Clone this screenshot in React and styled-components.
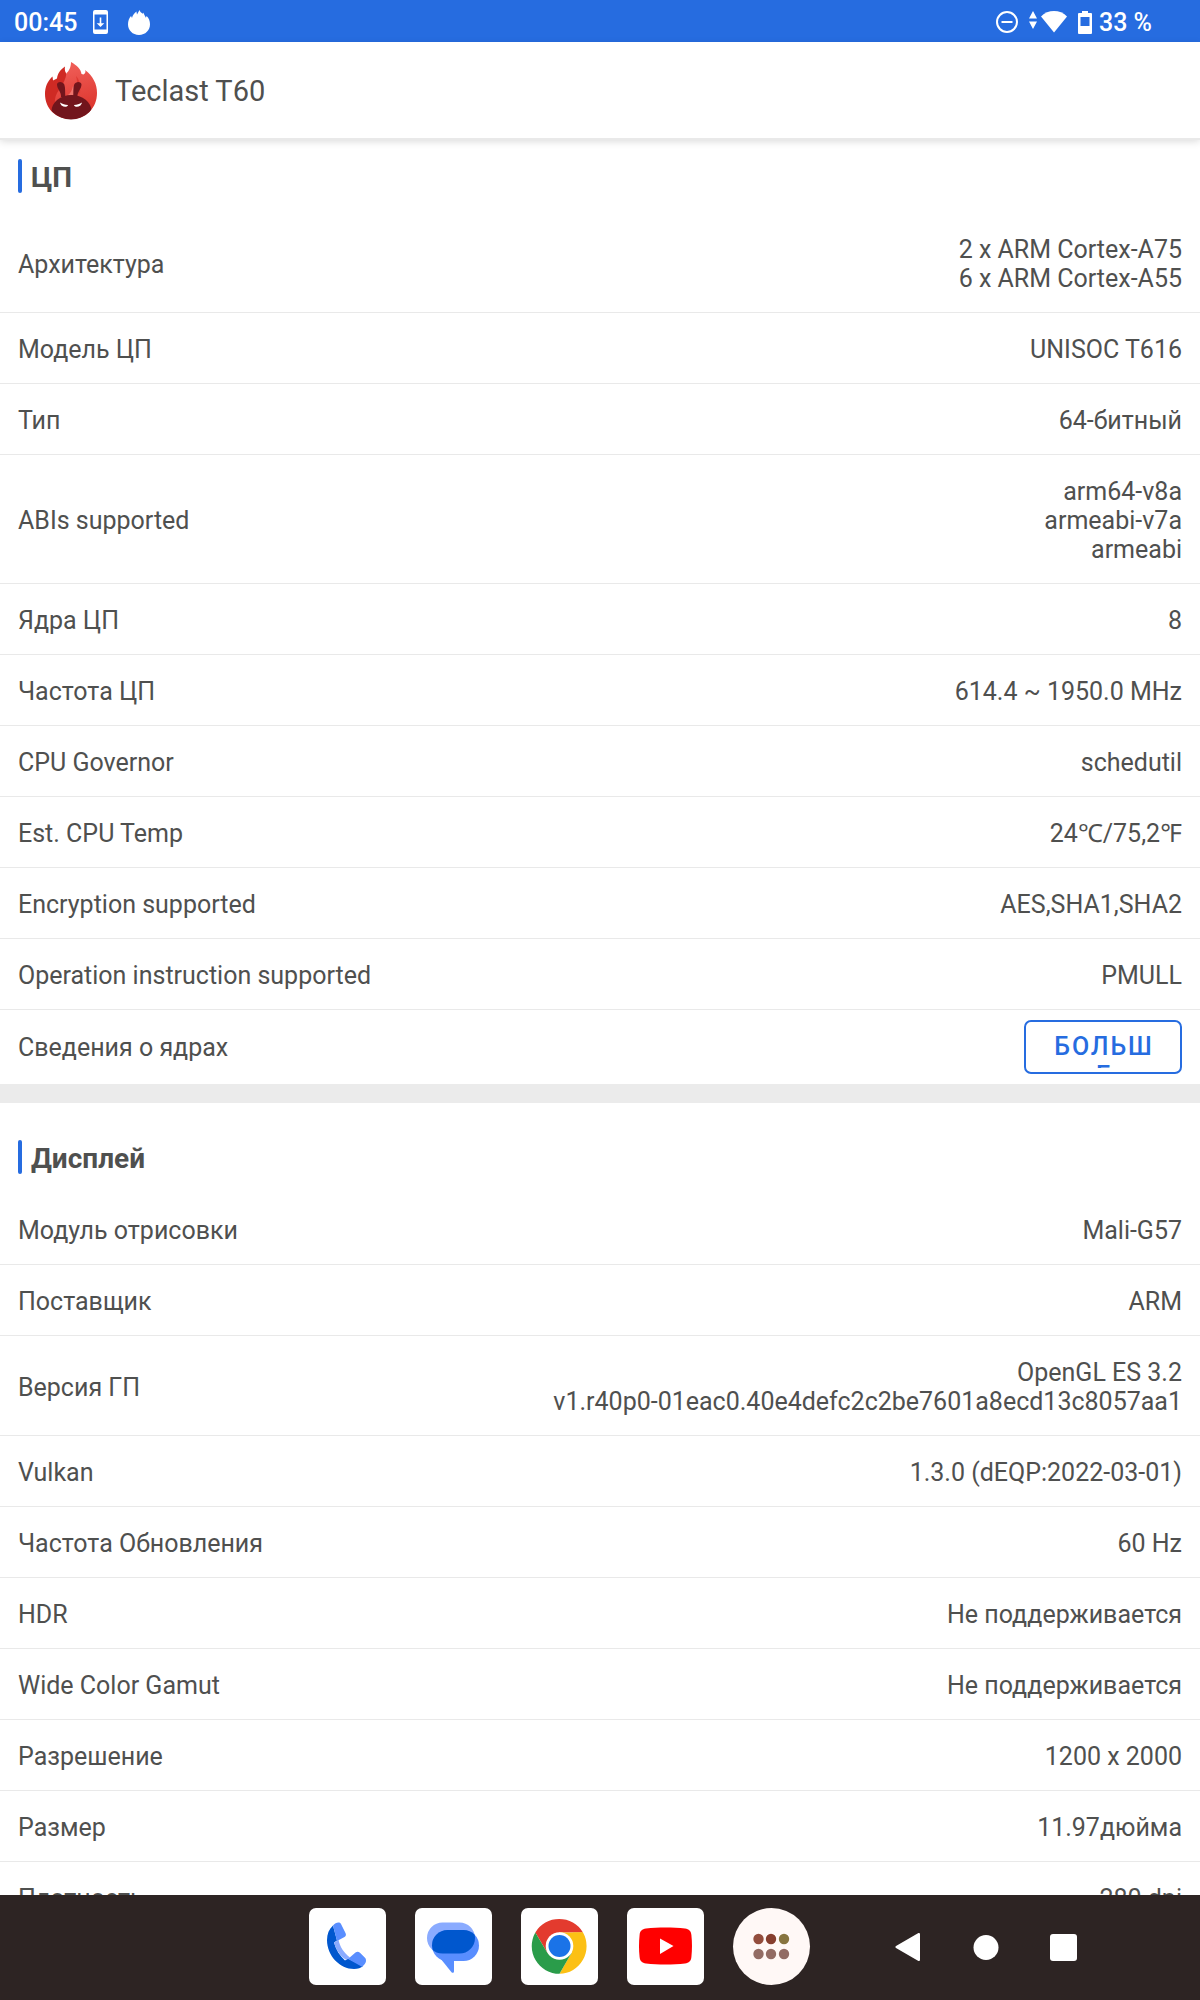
import React from "react"
import styled, { createGlobalStyle } from "styled-components"

const GlobalStyle = createGlobalStyle`
  * {
    box-sizing: border-box;
  }

  body {
    margin: 0;
    background: #fff;
    color: #4f504f;
    font-family: Roboto, "Noto Sans", "DejaVu Sans", sans-serif;
    font-size: 25px;
    line-height: 29px;
  }
`

const Screen = styled.div`
  display: flex;
  flex-direction: column;
  height: 100vh;
`

const StatusBar = styled.div`
  display: flex;
  flex-shrink: 0;
  align-items: center;
  justify-content: space-between;
  height: 42px;
  padding: 2px 48px 0 14px;
  background: #266ce0;
  color: #fff;
  font-weight: 500;
`

const StatusGroup = styled.div`
  display: flex;
  align-items: center;
  gap: ${(props) => props.$gap}px;

  svg {
    display: block;
  }
`

const Header = styled.header`
  display: flex;
  flex-shrink: 0;
  align-items: center;
  gap: 18px;
  height: 96px;
  padding: 2px 45px 0;
  background: #fff;
  box-shadow: 0 2px 0 #e9e9e9, 0 3px 8px rgba(0, 0, 0, 0.16);
  z-index: 1;
`

const DeviceName = styled.h1`
  margin: 0;
  font-size: 29px;
  font-weight: 400;
  line-height: 34px;
`

const Content = styled.main`
  flex: 1;
  min-height: 0;
  overflow-y: auto;
  scrollbar-width: none;
`

const Section = styled.section`
  padding-top: 21px;

  & + & {
    padding-top: 37px;
    border-top: 19px solid #ebebeb;
  }
`

const SectionTitle = styled.h2`
  display: flex;
  align-items: center;
  gap: 9px;
  height: 34px;
  margin: 0 0 20px;
  padding: 0 18px;
  font-size: 28px;
  font-weight: 700;
  line-height: 34px;

  &::before {
    content: "";
    width: 4px;
    height: 34px;
    border-radius: 2px;
    background: #266ce0;
  }

  span {
    padding-top: 3px;
  }
`

const Specs = styled.dl`
  margin: 0;
`

const Row = styled.div`
  display: flex;
  align-items: center;
  justify-content: space-between;
  gap: 24px;
  padding: 22px 18px 19px;
  border-bottom: 1px solid #e9e9e9;
`

const ActionRow = styled(Row)`
  padding: 10px 18px;
  border-bottom: 0;
`

const Label = styled.dt`
  margin: 0;
`

const Value = styled.dd`
  margin: 0;
  text-align: right;
  white-space: pre-line;
`

const MoreButton = styled.button`
  display: block;
  width: 158px;
  height: 54px;
  padding: 10px 22px 4px 24px;
  border: 2px solid #266ce0;
  border-radius: 7px;
  background: #fff;
  color: #266ce0;
  font: inherit;
  font-weight: 500;
  letter-spacing: 2px;

  span {
    display: block;
    height: 36px;
    overflow: hidden;
    word-break: break-all;
  }
`

const NavBar = styled.nav`
  display: flex;
  flex-shrink: 0;
  align-items: center;
  justify-content: flex-end;
  gap: 84px;
  height: 105px;
  padding: 0 123px 2px 0;
  background: #2d2423;
`

const Dock = styled.div`
  display: flex;
  gap: 29px;
`

const SystemKeys = styled.div`
  display: flex;
  gap: 51px;
`

const IconButton = styled.button`
  display: block;
  padding: 0;
  border: 0;
  background: none;

  svg {
    display: block;
  }
`

const AppButton = styled(IconButton)`
  width: 77px;
  height: 77px;
  overflow: hidden;
  border-radius: ${(props) => (props.$round ? "50%" : "7px")};
  background: ${(props) => (props.$round ? "#fff8f6" : "#fff")};
`

const DownloadIcon = () => (
  <svg width="15" height="24" viewBox="0 0 15 24" aria-hidden="true">
    <path
      fill="#fff"
      fillRule="evenodd"
      d="M2 0h11a2 2 0 0 1 2 2v20a2 2 0 0 1-2 2H2a2 2 0 0 1-2-2V2a2 2 0 0 1 2-2zM1.500 4.500v15h12v-15z"
    />
    <path fill="#fff" d="M6.700 7.500h1.600v5.800h3L7.500 17l-3.800-3.700h3z" />
  </svg>
)

const FlameIcon = () => (
  <svg width="22" height="25" viewBox="0 0 22 25" aria-hidden="true">
    <path
      fill="#fff"
      d="M11 25C4.600 25 0 20.300 0 14.300c0-3.300 1-6 3-8.300l1 2c.7-2.700 2-4.700 4.400-6.500L9 4.500 11.500 0c.5 1.700 1.800 3 3.500 3.800l.5-1.300c.5 2 1.600 3.400 2.400 5.200L18.600 6c2.400 2.300 3.400 5 3.400 8.300C22 20.300 17.400 25 11 25z"
    />
  </svg>
)

const DoNotDisturbIcon = () => (
  <svg width="22" height="22" viewBox="0 0 22 22" aria-hidden="true">
    <circle cx="11" cy="11" r="10" fill="none" stroke="#fff" strokeWidth="2" />
    <path stroke="#fff" strokeWidth="2" d="M5.500 11h11" />
  </svg>
)

const WifiIcon = () => (
  <svg width="38" height="22" viewBox="0 0 38 22" aria-hidden="true">
    <path fill="#fff" d="M0 7.500 4 0l4 7.500zM0 10.500h8L4 18z" />
    <path fill="#fff" d="M12 5.500C19-1.800 31-1.800 38 5.500L25 21.500z" />
  </svg>
)

const BatteryIcon = () => (
  <svg width="14" height="23" viewBox="0 0 14 23" aria-hidden="true">
    <path
      fill="#fff"
      fillRule="evenodd"
      d="M4 0h6v2h3a1 1 0 0 1 1 1v19a1 1 0 0 1-1 1H1a1 1 0 0 1-1-1V3a1 1 0 0 1 1-1h3zM2.500 6v9h9V6z"
    />
  </svg>
)

const Logo = () => (
  <svg width="52" height="58" viewBox="0 0 52 58" aria-hidden="true">
    <defs>
      <linearGradient id="flame" x1="0.4" y1="0" x2="0.6" y2="1">
        <stop offset="0" stopColor="#f05f59" />
        <stop offset="1" stopColor="#da3028" />
      </linearGradient>
      <clipPath id="disc">
        <circle cx="26" cy="31.500" r="26" />
      </clipPath>
    </defs>
    <path
      fill="#cf2a24"
      d="M26 57C10 57 0 46 0 32c0-7 2.500-13 7.500-17.500l.5 4 4-2c.5-5 3.500-9 8-12-.5 3 0 5 1 6.500l6 10z"
    />
    <path
      fill="url(#flame)"
      d="M17 55C8 46 8 36 14 28c4-6 7-11 7.500-17C24 9 26 5 26 0c6 3.500 10 7 10.500 12l2 .5c2-1.500 2.500-3 1.500-4.500 8 6 12 14 12 23 0 15-11 26-26 26-4 0-6-1-9-2z"
    />
    <path fill="#dd3832" d="M31 14c3 3 5 9 4 17l-5 2c2-6 3-12 1-19z" />
    <path fill="#f58a83" opacity="0.7" d="M28 24c2 3 3 5 3 9h-8c3-2 4-5 5-9z" />
    <path
      fill="#72151c"
      d="M12 22.500c0-3.500 6-3.500 7.300 0C20.500 26 20 30 20.300 35H16c.5-5-4-8-4-12.500zM36.500 22.500c0-3.500-6-3.500-7.300 0C28 26 28.500 30 28.200 35h4.300c-.5-5 4-8 4-12.500z"
    />
    <ellipse cx="26.500" cy="49" rx="20" ry="16" fill="#72151c" clipPath="url(#disc)" />
    <path
      fill="#fff"
      d="M15 40.500c2.500 1.500 5 2.300 8 2.500 0 2-4 2.500-6 .8-1-.8-1.700-2-2-3.300zM37 40.500c-2.500 1.500-5 2.300-8 2.500 0 2 4 2.500 6 .8 1-.8 1.700-2 2-3.300z"
    />
  </svg>
)

const PhoneIcon = () => (
  <svg width="77" height="77" viewBox="0 0 77 77" aria-hidden="true">
    <path
      fill="#0057ce"
      d="M24 17.500C20 21 18 26 18 32c0 16 13 29 27 29 4 0 7-1 9-3L39 50.500l-3 2C31 48 27 42 25 34.500l3-2z"
    />
    <path fill="#8aabff" d="M25 34.500 29.500 32C31 39 35 45 41 49.500L37.500 52C31 48 27 42 25 34.500z" />
    <path
      fill="#598eff"
      d="M24 17.500c2.500-3 6.500-4 8-1.500l4.500 9c.8 1.600.5 3-1 4L28 33zM39 51l7.500-6.500c1.500-1.200 3-1 4.500.3l5 5c1.800 2 1.500 6-3 9z"
    />
  </svg>
)

const MessagesIcon = () => (
  <svg width="77" height="77" viewBox="0 0 77 77" aria-hidden="true">
    <defs>
      <clipPath id="bubble">
        <rect x="12" y="14.500" width="48" height="31" rx="15.500" />
      </clipPath>
    </defs>
    <path fill="#598eff" d="M17 40 36.500 64.200c1 1 2.500.6 2.500-1V50z" />
    <rect x="12" y="14.500" width="48" height="31" rx="15.500" fill="#8aabff" />
    <rect x="17" y="22" width="47" height="31" rx="15.500" fill="#598eff" />
    <rect x="17" y="22" width="47" height="31" rx="15.500" fill="#0057ce" clipPath="url(#bubble)" />
  </svg>
)

const ChromeIcon = () => (
  <svg width="77" height="77" viewBox="0 0 77 77" aria-hidden="true">
    <path fill="#e33b2e" d="M14.300 24.500a27.700 27.700 0 0 1 47.700 0H38.500L26.500 45z" />
    <path fill="#fcc014" d="M62 24.500a27.700 27.700 0 0 1-23.500 41.300L50.500 45 52 24.500z" />
    <path fill="#2a9c4a" d="M14.300 24.500a27.700 27.700 0 0 0 24.200 41.300L50.500 45H26.500z" />
    <path fill="#fcc014" d="M38.500 24.500H62V40H50.500z" />
    <circle cx="38.500" cy="38" r="13.800" fill="#fff" />
    <circle cx="38.500" cy="38" r="11" fill="#1a73e8" />
  </svg>
)

const YoutubeIcon = () => (
  <svg width="77" height="77" viewBox="0 0 77 77" aria-hidden="true">
    <path
      fill="#f00"
      d="M19 20.500c12-1.300 27-1.300 39 0 4 .5 6 2.500 6.400 6.500.8 7 .8 15 0 22-.4 4-2.400 6-6.400 6.500-12 1.300-27 1.300-39 0-4-.5-6-2.500-6.400-6.500-.8-7-.8-15 0-22 .4-4 2.400-6 6.400-6.500z"
    />
    <path fill="#fff" d="M33 30.500 46.500 38 33 46z" />
  </svg>
)

const dots = [
  { cx: 25.500, cy: 31, fill: "#934d3d" },
  { cx: 38, cy: 31, fill: "#863e2e" },
  { cx: 51, cy: 31, fill: "#87743f" },
  { cx: 25.500, cy: 46, fill: "#926c64" },
  { cx: 38, cy: 46, fill: "#926c64" },
  { cx: 51, cy: 46, fill: "#926c64" },
]

const AllAppsIcon = () => (
  <svg width="77" height="77" viewBox="0 0 77 77" aria-hidden="true">
    {dots.map((dot) => (
      <circle key={`${dot.cx}-${dot.cy}`} r="5.200" {...dot} />
    ))}
  </svg>
)

const cpu = [
  ["Архитектура", "2 x ARM Cortex-A75\n6 x ARM Cortex-A55"],
  ["Модель ЦП", "UNISOC T616"],
  ["Тип", "64-битный"],
  ["ABIs supported", "arm64-v8a\narmeabi-v7a\narmeabi"],
  ["Ядра ЦП", "8"],
  ["Частота ЦП", "614.4 ~ 1950.0 MHz"],
  ["CPU Governor", "schedutil"],
  ["Est. CPU Temp", "24℃/75,2℉"],
  ["Encryption supported", "AES,SHA1,SHA2"],
  ["Operation instruction supported", "PMULL"],
]

const display = [
  ["Модуль отрисовки", "Mali-G57"],
  ["Поставщик", "ARM"],
  ["Версия ГП", "OpenGL ES 3.2\nv1.r40p0-01eac0.40e4defc2c2be7601a8ecd13c8057aa1"],
  ["Vulkan", "1.3.0 (dEQP:2022-03-01)"],
  ["Частота Обновления", "60 Hz"],
  ["HDR", "Не поддерживается"],
  ["Wide Color Gamut", "Не поддерживается"],
  ["Разрешение", "1200 x 2000"],
  ["Размер", "11.97дюйма"],
  ["Плотность", "280 dpi"],
]

const SpecRows = ({ items }) =>
  items.map(([label, value]) => (
    <Row key={label}>
      <Label>{label}</Label>
      <Value>{value}</Value>
    </Row>
  ))

const App = () => {
  return (
    <Screen>
      <GlobalStyle />
      <StatusBar>
        <StatusGroup $gap={16}>
          <span>00:45</span>
          <StatusGroup $gap={20}>
            <DownloadIcon />
            <FlameIcon />
          </StatusGroup>
        </StatusGroup>
        <StatusGroup $gap={7}>
          <StatusGroup $gap={11}>
            <DoNotDisturbIcon />
            <WifiIcon />
            <BatteryIcon />
          </StatusGroup>
          <span>33 %</span>
        </StatusGroup>
      </StatusBar>
      <Header>
        <Logo />
        <DeviceName>Teclast T60</DeviceName>
      </Header>
      <Content>
        <Section>
          <SectionTitle>
            <span>ЦП</span>
          </SectionTitle>
          <Specs>
            <SpecRows items={cpu} />
            <ActionRow>
              <Label id="cores">Сведения о ядрах</Label>
              <Value>
                <MoreButton type="button" aria-describedby="cores">
                  <span>БОЛЬШЕ</span>
                </MoreButton>
              </Value>
            </ActionRow>
          </Specs>
        </Section>
        <Section>
          <SectionTitle>
            <span>Дисплей</span>
          </SectionTitle>
          <Specs>
            <SpecRows items={display} />
          </Specs>
        </Section>
      </Content>
      <NavBar>
        <Dock>
          <AppButton type="button" aria-label="Телефон">
            <PhoneIcon />
          </AppButton>
          <AppButton type="button" aria-label="Сообщения">
            <MessagesIcon />
          </AppButton>
          <AppButton type="button" aria-label="Chrome">
            <ChromeIcon />
          </AppButton>
          <AppButton type="button" aria-label="YouTube">
            <YoutubeIcon />
          </AppButton>
          <AppButton type="button" aria-label="Все приложения" $round>
            <AllAppsIcon />
          </AppButton>
        </Dock>
        <SystemKeys>
          <IconButton type="button" aria-label="Назад">
            <svg width="27" height="28" viewBox="0 0 27 28">
              <path fill="#fff" d="M2 13 24 .3c1-.6 2 0 2 1v25.400c0 1-1 1.600-2 1L2 15c-.8-.6-.8-1.400 0-2z" />
            </svg>
          </IconButton>
          <IconButton type="button" aria-label="Домой">
            <svg width="27" height="28" viewBox="0 0 27 28">
              <circle cx="14" cy="14.500" r="12.500" fill="#fff" />
            </svg>
          </IconButton>
          <IconButton type="button" aria-label="Недавние">
            <svg width="27" height="28" viewBox="0 0 27 28">
              <rect y="1" width="27" height="27" rx="3" fill="#fff" />
            </svg>
          </IconButton>
        </SystemKeys>
      </NavBar>
    </Screen>
  )
}

export default App
